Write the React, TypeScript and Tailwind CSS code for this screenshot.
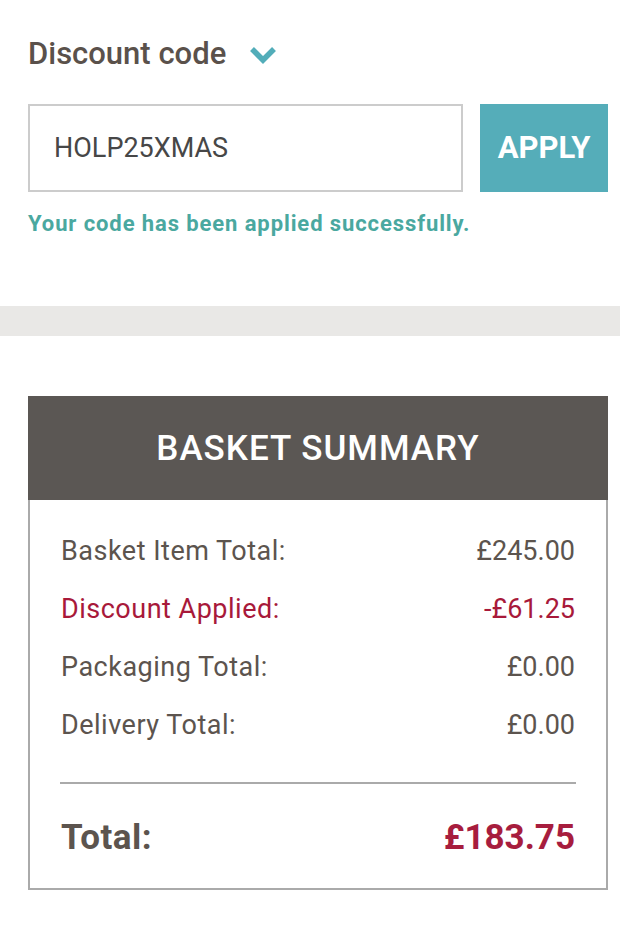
import React from "react";

const font = { fontFamily: "Roboto, 'Noto Sans', sans-serif" };

function Row({ label, value, red }: { label: string; value: string; red?: boolean }) {
  return (
    <div
      className={`flex justify-between px-[1px] text-[27px] leading-[58px] ${
        red ? "text-[#a8193a]" : "text-[#5c544e]"
      }`}
    >
      <span className="tracking-[0.5px]">{label}</span>
      <span>{value}</span>
    </div>
  );
}

export default function App() {
  return (
    <div className="w-[620px] min-h-[946px] bg-white" style={font}>
      <div className="pl-[28px] pr-[12px]">
        <div className="flex items-center pt-[38px]">
          <h2 className="text-[31px] leading-[31px] font-medium text-[#5a514b]">Discount code</h2>
          <svg
            className="ml-[23px] mt-[2px]"
            width="28"
            height="20"
            viewBox="0 0 28 20"
            fill="none"
          >
            <polyline
              points="3,4 14,15 25,4"
              stroke="#52adb9"
              strokeWidth="5.5"
              strokeLinecap="butt"
              strokeLinejoin="miter"
            />
          </svg>
        </div>

        <div className="mt-[35px] flex h-[88px] gap-[17px]">
          <div className="flex flex-1 items-center border-2 border-[#cccccc] pl-[24px] text-[27px] text-[#474747]">
            HOLP25XMAS
          </div>
          <button className="flex w-[128px] items-center justify-center bg-[#55adb9] text-[31px] font-bold text-white">
            APPLY
          </button>
        </div>

        <p className="mt-[20px] text-[22px] leading-[23px] font-bold tracking-[0.9px] text-[#4aa8a0]">
          Your code has been applied successfully.
        </p>
      </div>

      <div className="mt-[71px] h-[30px] bg-[#e9e8e6]" />

      <div className="mt-[60px] ml-[28px] w-[580px] pb-[56px]">
        <div className="flex h-[104px] items-center justify-center bg-[#5b5754]">
          <span className="text-[35px] leading-[35px] font-medium tracking-[1px] text-white">
            BASKET SUMMARY
          </span>
        </div>
        <div className="border-x-2 border-b-2 border-[#aaaaaa] px-[30px] pt-[22px] pb-[32px]">
          <Row label="Basket Item Total:" value="£245.00" />
          <Row label="Discount Applied:" value="-£61.25" red />
          <Row label="Packaging Total:" value="£0.00" />
          <Row label="Delivery Total:" value="£0.00" />
          <div className="mt-[28px] h-[2px] bg-[#aaaaaa]" />
          <div className="mt-[36px] flex justify-between px-[1px] text-[35px] leading-[36px] font-bold">
            <span className="text-[#5c544e] tracking-[0.5px]">Total:</span>
            <span className="text-[#a71d3e]">£183.75</span>
          </div>
        </div>
      </div>
    </div>
  );
}
